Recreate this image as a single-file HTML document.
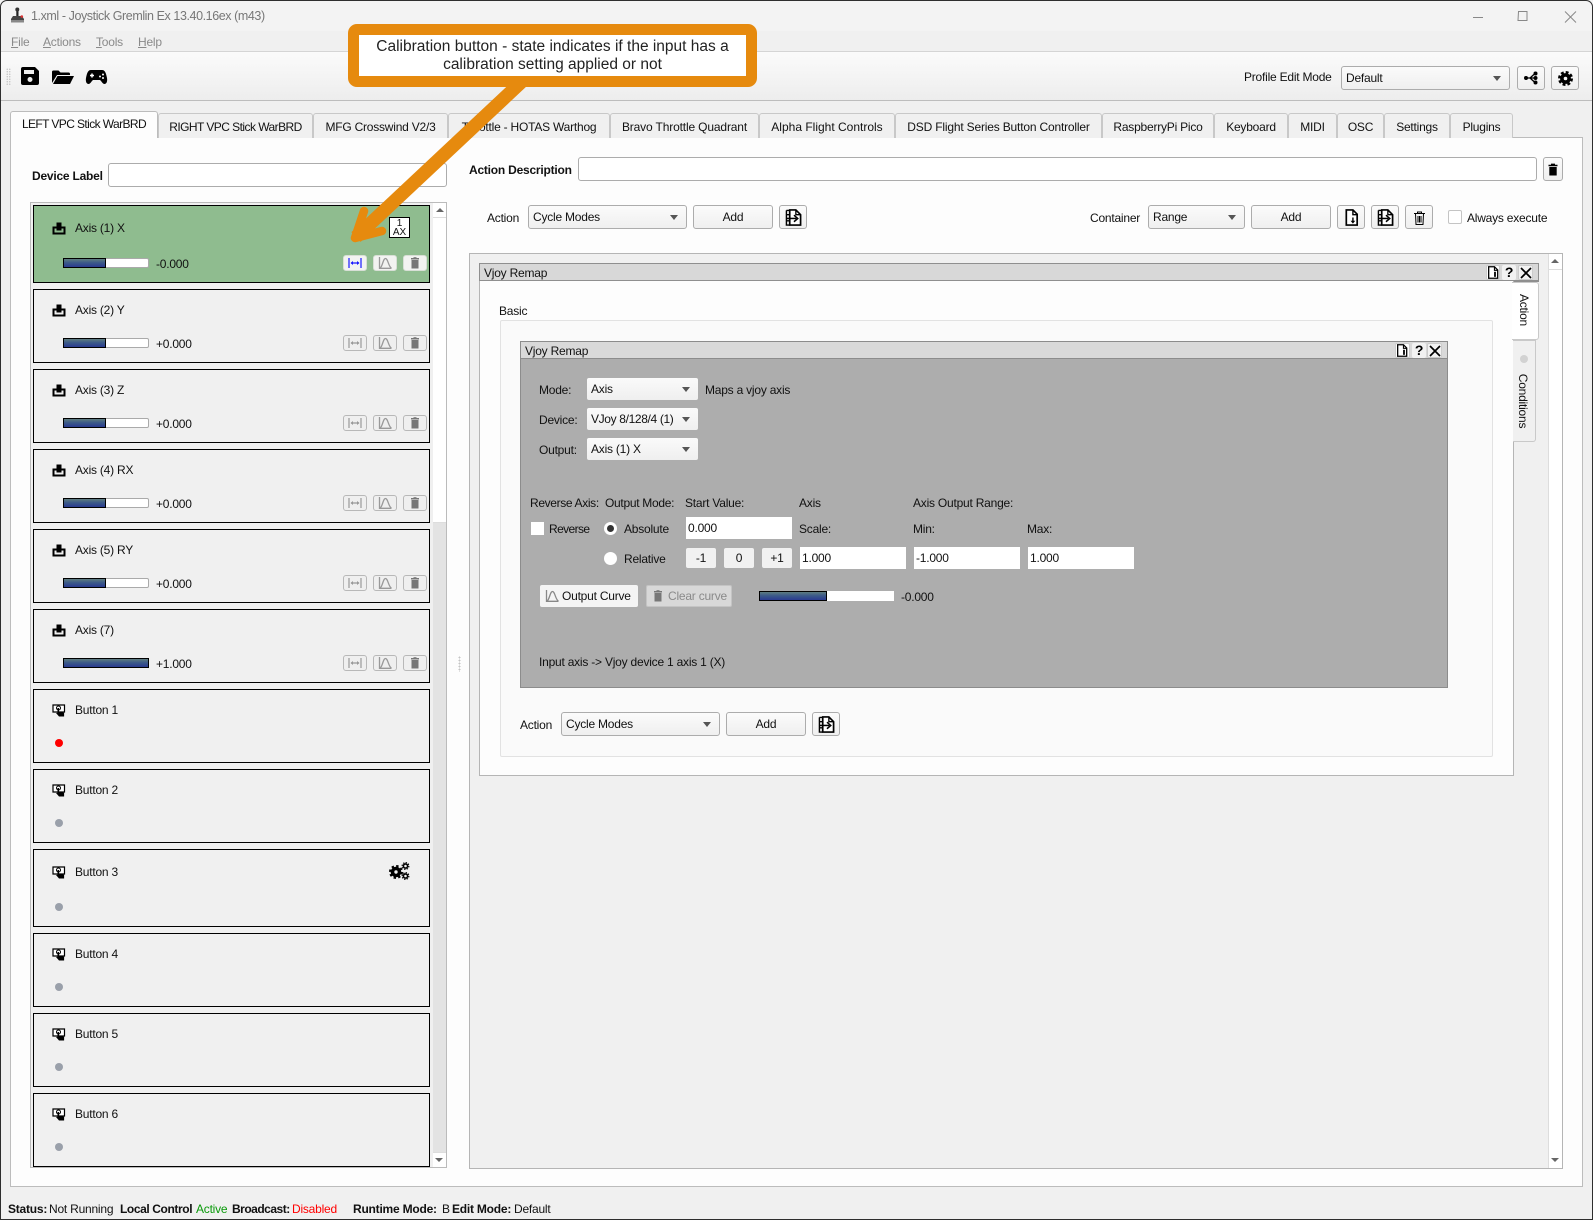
<!DOCTYPE html>
<html><head><meta charset="utf-8"><title>Joystick Gremlin Ex</title>
<style>
html,body{margin:0;padding:0;width:1593px;height:1220px;overflow:hidden;background:#f0f0f0}
body{position:relative;font-family:"Liberation Sans",sans-serif;font-size:12px;letter-spacing:-.22px;color:#111}
div,span,svg{position:absolute;box-sizing:border-box}
.t{height:16px;line-height:16px;white-space:nowrap}
b{font-weight:bold}
u{text-decoration:underline}
.m{color:#8a8a8a;top:34px}
.tab{top:113px;height:25px;background:#f0f0f0;border:1px solid #c8c8c8;border-bottom:none;border-radius:3px 3px 0 0;display:flex;align-items:center;justify-content:center;white-space:nowrap;padding-top:1px}
.in{background:#fff;border:1px solid #acacac;border-radius:3px}
.cb{background:linear-gradient(#fbfbfb,#efefef);border:1px solid #acacac;border-radius:3px;padding-left:4px;line-height:23px;white-space:nowrap}
.cb:after,.gc:after{content:"";position:absolute;right:8px;top:9px;border:4px solid transparent;border-top:5px solid #555;border-bottom:none}
.btn{background:linear-gradient(#fbfbfb,#efefef);border:1px solid #acacac;border-radius:3px;text-align:center;line-height:23px}
.gc{background:linear-gradient(#fafafa,#efefef);border-radius:2px;padding-left:4px;height:22px;line-height:23px;white-space:nowrap}
.gi{background:#fff;height:22px;padding-left:2px;line-height:22px}
.gb{background:#f1f1f1;border-radius:2px;text-align:center;line-height:20px;height:20px;width:30px;top:548px}
.r{left:33px;width:397px;height:74px;background:#f0f0f0;border:1.3px solid #000}
.r.h{height:78px}
.ic{left:18px;top:14px;width:14px;height:13px}
.h .ic{top:16px}
.l{left:41px;top:12px}
.h .l{top:14px}
.bar{left:29px;top:48px;width:86px;height:10px;background:#fff;border:1px solid #aaa;border-radius:2px}
.h .bar{top:52px}
.bar i,.b2 i{position:absolute;left:-1px;top:-1px;bottom:-1px;display:block;border:1px solid #000;background:linear-gradient(#5f7d80,#3c5a88 45%,#2a3a90)}
.v{left:122px;top:46px}
.h .v{top:50px}
.sb{top:45px;width:24px;height:16px;background:#efefef;border:1px solid #b8b8b8;border-radius:3px}
.h .sb{top:49px;background:#f2f3f1;border-color:#d8dfd6}
.sb svg{left:4px;top:1px;width:14px;height:12px}
.d{left:21px;top:49px;width:8px;height:8px;border-radius:50%;background:#9aa0aa}
.h .d{top:53px}
.st{top:1201px}
</style></head><body>

<svg width="0" height="0" style="left:0;top:0">
<symbol id="axis" viewBox="0 0 14 13"><path fill-rule="evenodd" d="M.5 4.500h4V.5h5v4h4V12.500H.5zM2.500 6.500v4h9v-4H9.500v2h-5v-2z" fill="#000"/></symbol>
<symbol id="btn" viewBox="0 0 14 13"><path d="M1 1h11.500v7H1z" fill="#fff" stroke="#000" stroke-width="1.200"/><circle cx="6.500" cy="4" r="2" fill="none" stroke="#000"/><path d="M5.500 4h1.600v3.500l5 1.200V12.500H7L4 9l1.500-.2z" fill="#000"/></symbol>
<symbol id="cal" viewBox="0 0 14 12"><path d="M1 1v10M13 1v10M3 6h8" stroke="currentColor" stroke-width="1.200" fill="none"/><path d="M2.500 6l2.500-2v4zM11.500 6L9 4v4z" fill="currentColor"/></symbol>
<symbol id="crv" viewBox="0 0 14 12"><path d="M1.500 0v11.300h12" fill="none" stroke="currentColor" stroke-width="1.300"/><path d="M2 11C4.500 10 5 1.500 7.500 1.500S10.500 10 13.500 11" fill="none" stroke="currentColor" stroke-width="1.300"/></symbol>
<symbol id="tr" viewBox="0 0 14 12"><path d="M3 1h8v1.500H3zM3.500 3h7v8.500h-7z" fill="currentColor"/><path d="M5.500 .2h3V1h-3z" fill="currentColor"/></symbol>
<symbol id="doc" viewBox="0 0 16 18"><path d="M2.500 1h7l4.500 4.500V17H2.500z" fill="#fff" stroke="#000" stroke-width="1.800"/><path d="M9.500 1v5H14" fill="none" stroke="#000" stroke-width="1.500"/></symbol>
<symbol id="tdoc" viewBox="0 0 16 18"><path d="M2 1h8l4.500 4.500V17H2z" fill="#fff" stroke="#000" stroke-width="1.800"/><path d="M10 1v5h4.500" fill="none" stroke="#000" stroke-width="1.500"/><path d="M9.500 8h2.500v7H9.500z" fill="#000"/></symbol>
<symbol id="docin" viewBox="0 0 16 18"><path d="M2.500 1h7l4.500 4.500V17H2.500z" fill="#fff" stroke="#000" stroke-width="1.800"/><path d="M9.500 1v5H14" fill="none" stroke="#000" stroke-width="1.500"/><path d="M9.500 9v5" stroke="#000" stroke-width="1.500"/><path d="M7 12.500h5L9.500 15.500z" fill="#000"/></symbol>
<symbol id="docout" viewBox="0 0 18 18"><path d="M5 1h6.500L16.500 6V17H5z" fill="#fff" stroke="#000" stroke-width="1.800"/><path d="M11.500 1v5h5" fill="none" stroke="#000" stroke-width="1.400"/><path d="M1.500 1.500H5M1.500 1.500V17H5M1.500 6H5M1.500 12.500H5" fill="none" stroke="#000" stroke-width="1.500"/><path d="M2 10h10" stroke="#000" stroke-width="1.600"/><path d="M9.500 6.500l4 3.500-4 3.500" fill="none" stroke="#000" stroke-width="1.600"/></symbol>
</svg>

<!-- window chrome -->
<div style="left:0;top:0;width:1593px;height:31px;background:#f3f3f3"></div>
<div style="left:0;top:31px;width:1593px;height:21px;background:#f0f0f0;border-bottom:1px solid #d5d5d5"></div>
<div style="left:0;top:52px;width:1593px;height:49px;background:linear-gradient(#fbfbfb,#ededed);border-bottom:1px solid #bdbdbd"></div>
<div style="left:0;top:0;width:1593px;height:1220px;border:1px solid #2e2e2e;border-radius:7px 7px 0 0;z-index:30"></div>
<svg style="left:10px;top:7px" width="15" height="17" viewBox="0 0 15 17"><path d="M6.300 1h2.200v8H6.300z" fill="#222"/><circle cx="7.300" cy="2.500" r="2" fill="#333"/><path d="M3 9h9l2 3v1H1v-1z" fill="#444"/><path d="M1 13h13v2.500H1z" fill="#888"/><circle cx="11.800" cy="9.500" r="1.300" fill="#d33"/></svg>
<span class="t" style="left:31px;top:8px;color:#777;font-size:12.500px;letter-spacing:-.42px">1.xml - Joystick Gremlin Ex 13.40.16ex (m43)</span>
<svg style="left:1467px;top:5px" width="120" height="22" fill="none" stroke="#888" stroke-width="1"><path d="M6 12.500h10M51.500 6.500h8.500v9h-9zM98 6.500l11 11M109 6.500l-11 11"/></svg>
<span class="t m" style="left:11px"><u>F</u>ile</span>
<span class="t m" style="left:43px"><u>A</u>ctions</span>
<span class="t m" style="left:96px"><u>T</u>ools</span>
<span class="t m" style="left:138px"><u>H</u>elp</span>

<div style="left:6px;top:68px;width:5px;height:17px;background:radial-gradient(#c4c4c4 35%,transparent 45%) 0 0/2.500px 2.500px"></div>
<svg style="left:20px;top:66px" width="20" height="20" viewBox="0 0 20 20"><path d="M3 1h12l4 4v12a2 2 0 0 1-2 2H3a2 2 0 0 1-2-2V3a2 2 0 0 1 2-2z" fill="#000"/><path d="M4 4h10v4H4z" fill="#eee"/><circle cx="10" cy="13.500" r="2.500" fill="#eee"/></svg>
<svg style="left:51px;top:69px" width="24" height="16" viewBox="0 0 24 16"><path d="M1 14V3a1.500 1.500 0 0 1 1.500-1.500h5l2 2h8A1.500 1.500 0 0 1 19 5v1H6L1 14z" fill="#000"/><path d="M6.500 7H23l-4 8H2z" fill="#000"/></svg>
<svg style="left:85px;top:69px" width="23" height="16" viewBox="0 0 23 16"><path d="M6 1h11c3 0 4 3 5 8 .6 3.500-.5 6-2.500 6-2 0-3-3-4.500-4H8c-1.500 1-2.500 4-4.500 4C1.500 15 .4 12.500 1 9c1-5 2-8 5-8z" fill="#000"/><path d="M5 6.500h4M7 4.500v4" stroke="#fff" stroke-width="1.500"/><circle cx="15" cy="7.500" r="1" fill="#fff"/><circle cx="18" cy="5.500" r="1" fill="#fff"/><circle cx="18" cy="9" r="1" fill="#fff"/></svg>

<span class="t" style="left:1244px;top:69px">Profile Edit Mode</span>
<div class="cb" style="left:1341px;top:66px;width:169px;height:24px">Default</div>
<div class="btn" style="left:1517px;top:66px;width:28px;height:24px"><svg style="left:6px;top:4px" width="15" height="14" viewBox="0 0 15 14"><path d="M2 7h4M6 7l5-4.500M6 7h5M6 7l5 4.500" stroke="#000" stroke-width="1.300" fill="none"/><circle cx="2" cy="7" r="2"/><circle cx="11.500" cy="2.500" r="2"/><circle cx="11.500" cy="7" r="2"/><circle cx="11.500" cy="11.500" r="2"/></svg></div>
<div class="btn" style="left:1551px;top:66px;width:28px;height:24px"><svg style="left:6px;top:4px" width="15" height="15" viewBox="0 0 15 15"><circle cx="7.500" cy="7.500" r="3.600" fill="none" stroke="#000" stroke-width="3.600"/><circle cx="7.500" cy="7.500" r="6.300" fill="none" stroke="#000" stroke-width="2.400" stroke-dasharray="2.900 2.050"/></svg></div>

<!-- tabs -->
<div style="left:10px;top:137px;width:1573px;height:1050px;background:#fdfdfd;border:1px solid #bcbcbc"></div>
<div class="tab" style="left:158px;width:155px;letter-spacing:-.55px">RIGHT VPC Stick WarBRD</div>
<div class="tab" style="left:313px;width:135px">MFG Crosswind V2/3</div>
<div class="tab" style="left:448px;width:162px">Throttle - HOTAS Warthog</div>
<div class="tab" style="left:610px;width:149px;letter-spacing:-.15px">Bravo Throttle Quadrant</div>
<div class="tab" style="left:759px;width:136px;letter-spacing:0">Alpha Flight Controls</div>
<div class="tab" style="left:895px;width:207px;letter-spacing:-.18px">DSD Flight Series Button Controller</div>
<div class="tab" style="left:1102px;width:112px">RaspberryPi Pico</div>
<div class="tab" style="left:1214px;width:74px">Keyboard</div>
<div class="tab" style="left:1288px;width:49px">MIDI</div>
<div class="tab" style="left:1337px;width:47px">OSC</div>
<div class="tab" style="left:1384px;width:66px">Settings</div>
<div class="tab" style="left:1450px;width:63px">Plugins</div>
<div class="tab" style="left:10px;top:111px;width:148px;height:27px;background:#fdfdfd;border-color:#bcbcbc;padding-top:0;padding-bottom:2px;letter-spacing:-.6px">LEFT VPC Stick WarBRD</div>

<!-- left panel -->
<span class="t" style="left:32px;top:168px"><b>Device Label</b></span>
<div class="in" style="left:108px;top:163px;width:339px;height:24px"></div>
<div style="left:30px;top:202px;width:417px;height:966px;background:#f0f0f0;border:1px solid #bbb"></div>

<div style="left:433px;top:203px;width:13px;height:964px;background:#e3e3e3"></div>
<div style="left:433px;top:203px;width:13px;height:320px;background:#fff;border-bottom:1px solid #ddd"></div>
<div style="left:433px;top:203px;width:13px;height:15px;background:#fff;border-bottom:1px solid #ddd"></div>
<div style="left:436px;top:208px;border:4px solid transparent;border-bottom:4px solid #666;border-top:none"></div>
<div style="left:433px;top:1152px;width:13px;height:15px;background:#fff;border-top:1px solid #ddd"></div>
<div style="left:435px;top:1158px;border:4px solid transparent;border-top:4px solid #666;border-bottom:none"></div>

<div class="r h" style="top:205px;background:#8fbc8f"><svg class="ic"><use href="#axis"/></svg><span class="t l">Axis (1) X</span><div class="bar"><i style="width:41px"></i></div><span class="t v">-0.000</span>
<div class="sb" style="left:309px;color:#1a1aff"><svg><use href="#cal"/></svg></div><div class="sb" style="left:339px;color:#999"><svg><use href="#crv"/></svg></div><div class="sb" style="left:369px;color:#777"><svg><use href="#tr"/></svg></div>
<div style="left:355px;top:11px;width:21px;height:21px;background:#fff;border:1px solid #000;font-size:10px;line-height:9px;text-align:center;padding-top:1px;letter-spacing:0">1<br>AX</div></div>

<div class="r" style="top:289px"><svg class="ic"><use href="#axis"/></svg><span class="t l">Axis (2) Y</span><div class="bar"><i style="width:41px"></i></div><span class="t v">+0.000</span>
<div class="sb" style="left:309px;color:#999"><svg><use href="#cal"/></svg></div><div class="sb" style="left:339px;color:#999"><svg><use href="#crv"/></svg></div><div class="sb" style="left:369px;color:#777"><svg><use href="#tr"/></svg></div></div>

<div class="r" style="top:369px"><svg class="ic"><use href="#axis"/></svg><span class="t l">Axis (3) Z</span><div class="bar"><i style="width:41px"></i></div><span class="t v">+0.000</span>
<div class="sb" style="left:309px;color:#999"><svg><use href="#cal"/></svg></div><div class="sb" style="left:339px;color:#999"><svg><use href="#crv"/></svg></div><div class="sb" style="left:369px;color:#777"><svg><use href="#tr"/></svg></div></div>

<div class="r" style="top:449px"><svg class="ic"><use href="#axis"/></svg><span class="t l">Axis (4) RX</span><div class="bar"><i style="width:41px"></i></div><span class="t v">+0.000</span>
<div class="sb" style="left:309px;color:#999"><svg><use href="#cal"/></svg></div><div class="sb" style="left:339px;color:#999"><svg><use href="#crv"/></svg></div><div class="sb" style="left:369px;color:#777"><svg><use href="#tr"/></svg></div></div>

<div class="r" style="top:529px"><svg class="ic"><use href="#axis"/></svg><span class="t l">Axis (5) RY</span><div class="bar"><i style="width:41px"></i></div><span class="t v">+0.000</span>
<div class="sb" style="left:309px;color:#999"><svg><use href="#cal"/></svg></div><div class="sb" style="left:339px;color:#999"><svg><use href="#crv"/></svg></div><div class="sb" style="left:369px;color:#777"><svg><use href="#tr"/></svg></div></div>

<div class="r" style="top:609px"><svg class="ic"><use href="#axis"/></svg><span class="t l">Axis (7)</span><div class="bar"><i style="width:84px"></i></div><span class="t v">+1.000</span>
<div class="sb" style="left:309px;color:#999"><svg><use href="#cal"/></svg></div><div class="sb" style="left:339px;color:#999"><svg><use href="#crv"/></svg></div><div class="sb" style="left:369px;color:#777"><svg><use href="#tr"/></svg></div></div>

<div class="r" style="top:689px"><svg class="ic"><use href="#btn"/></svg><span class="t l">Button 1</span><div class="d" style="background:#f00"></div></div>
<div class="r" style="top:769px"><svg class="ic"><use href="#btn"/></svg><span class="t l">Button 2</span><div class="d"></div></div>
<div class="r h" style="top:849px"><svg class="ic"><use href="#btn"/></svg><span class="t l">Button 3</span><div class="d"></div>
<svg style="left:355px;top:12px" width="21" height="19" viewBox="0 0 21 19"><circle cx="7" cy="10" r="3.500" fill="none" stroke="#000" stroke-width="3.600"/><circle cx="7" cy="10" r="6" fill="none" stroke="#000" stroke-width="2" stroke-dasharray="2.400 2.310"/><circle cx="16.500" cy="4" r="2.100" fill="none" stroke="#000" stroke-width="1.600"/><circle cx="16.500" cy="4" r="3.400" fill="none" stroke="#000" stroke-width="1.100" stroke-dasharray="1.400 1.270"/><circle cx="16.500" cy="14" r="2.100" fill="none" stroke="#000" stroke-width="1.600"/><circle cx="16.500" cy="14" r="3.400" fill="none" stroke="#000" stroke-width="1.100" stroke-dasharray="1.400 1.270"/></svg></div>
<div class="r" style="top:933px"><svg class="ic"><use href="#btn"/></svg><span class="t l">Button 4</span><div class="d"></div></div>
<div class="r" style="top:1013px"><svg class="ic"><use href="#btn"/></svg><span class="t l">Button 5</span><div class="d"></div></div>
<div class="r" style="top:1093px"><svg class="ic"><use href="#btn"/></svg><span class="t l">Button 6</span><div class="d"></div></div>

<div style="left:458px;top:656px;width:3px;height:16px;background:radial-gradient(#c4c4c4 40%,transparent 50%) 0 0/3px 3px"></div>

<!-- right panel top -->
<span class="t" style="left:469px;top:162px"><b>Action Description</b></span>
<div class="in" style="left:578px;top:157px;width:959px;height:24px"></div>
<div class="btn" style="left:1543px;top:157px;width:20px;height:24px"><svg style="left:3px;top:5px;width:12px;height:13px" viewBox="0 0 12 13"><path d="M1.500 1.800h9v1.400h-9zM4 .6h4v1.200H4zM2.300 4h7.400v8.500H2.300z" fill="#000"/></svg></div>

<span class="t" style="left:487px;top:210px">Action</span>
<div class="cb" style="left:528px;top:205px;width:159px;height:24px">Cycle Modes</div>
<div class="btn" style="left:693px;top:205px;width:80px;height:24px">Add</div>
<div class="btn" style="left:779px;top:205px;width:28px;height:24px"><svg style="left:5px;top:3px;width:17px;height:17px"><use href="#docout"/></svg></div>

<span class="t" style="left:1090px;top:210px">Container</span>
<div class="cb" style="left:1148px;top:205px;width:97px;height:24px">Range</div>
<div class="btn" style="left:1251px;top:205px;width:80px;height:24px">Add</div>
<div class="btn" style="left:1337px;top:205px;width:28px;height:24px"><svg style="left:5px;top:3px;width:17px;height:17px"><use href="#docin"/></svg></div>
<div class="btn" style="left:1371px;top:205px;width:28px;height:24px"><svg style="left:5px;top:3px;width:17px;height:17px"><use href="#docout"/></svg></div>
<div class="btn" style="left:1405px;top:205px;width:28px;height:24px"><svg style="left:7px;top:5px;width:13px;height:14px" viewBox="0 0 13 14" fill="none" stroke="#000"><path d="M1 2.500h11M4.500 2.500V1h4v1.500M2.500 2.500l.5 11h7l.5-11M5 5v6.500M6.500 5v6.500M8 5v6.500"/></svg></div>
<div style="left:1448px;top:210px;width:14px;height:14px;background:#fff;border:1px solid #c4c4c4;border-radius:2px"></div>
<span class="t" style="left:1467px;top:210px">Always execute</span>

<!-- action scroll area -->
<div style="left:469px;top:253px;width:1094px;height:916px;background:#f0f0f0;border:1px solid #b5b5b5"></div>
<div style="left:1548px;top:254px;width:14px;height:914px;background:#fff;border-left:1px solid #ddd"></div>
<div style="left:1548px;top:254px;width:14px;height:16px;background:#fff;border-bottom:1px solid #ddd;border-left:1px solid #ddd"></div>
<div style="left:1551px;top:259px;border:4px solid transparent;border-bottom:4px solid #666;border-top:none"></div>
<div style="left:1551px;top:1158px;border:4px solid transparent;border-top:4px solid #666;border-bottom:none"></div>

<div style="left:479px;top:263px;width:1060px;height:19px;background:#d8d8d8;border:1px solid #8f8f8f;border-bottom-width:2px"></div>
<span class="t" style="left:484px;top:265px">Vjoy Remap</span>
<div style="left:1486px;top:265px;width:14px;height:15px;background:#fff;border-radius:2px;border:1px solid #ccc"><svg style="left:0;top:0;width:12px;height:13px"><use href="#tdoc"/></svg></div>
<div style="left:1502px;top:265px;width:14px;height:15px;background:#f2f2f2;border-radius:2px;font:bold 14px/15px 'Liberation Sans',sans-serif;text-align:center;color:#000">?</div>
<div style="left:1518px;top:265px;width:15px;height:15px;background:#f2f2f2;border-radius:2px;border:1px solid #ccc"><svg style="left:1px;top:1px" width="12" height="12"><path d="M1 1l10 10M11 1L1 11" stroke="#000" stroke-width="1.700"/></svg></div>

<div style="left:479px;top:281px;width:1035px;height:495px;background:#fdfdfd;border:1px solid #b5b5b5;border-top:none"></div>
<div style="left:1513px;top:340px;width:23px;height:102px;background:#f0f0f0;border:1px solid #c9c9c9;border-left:none;border-radius:0 0 3px 0"></div>
<div style="left:1520px;top:355px;width:8px;height:8px;border-radius:50%;background:#d2d2d2"></div>
<span class="t" style="left:1523px;top:401px;transform:translate(-50%,-50%) rotate(90deg)">Conditions</span>
<div style="left:1512px;top:282px;width:27px;height:58px;background:#fff;border:1px solid #c9c9c9;border-left:none;border-radius:0 3px 3px 0"></div>
<span class="t" style="left:1524px;top:310px;transform:translate(-50%,-50%) rotate(90deg)">Action</span>

<span class="t" style="left:499px;top:303px">Basic</span>
<div style="left:500px;top:320px;width:993px;height:437px;background:#fafafa;border:1px solid #e2e2e2;border-radius:2px"></div>

<div style="left:520px;top:341px;width:928px;height:347px;background:#adadad;border:1px solid #8c8c8c"></div>
<div style="left:521px;top:342px;width:926px;height:17px;background:#d9d9d9;border-bottom:1px solid #8c8c8c"></div>
<span class="t" style="left:525px;top:343px">Vjoy Remap</span>
<div style="left:1395px;top:343px;width:15px;height:15px;background:#fff;border-radius:2px;border:1px solid #ccc"><svg style="left:0;top:0;width:12px;height:13px"><use href="#tdoc"/></svg></div>
<div style="left:1412px;top:343px;width:14px;height:15px;background:#f2f2f2;border-radius:2px;font:bold 14px/15px 'Liberation Sans',sans-serif;text-align:center;color:#000">?</div>
<div style="left:1427px;top:343px;width:15px;height:15px;background:#f2f2f2;border-radius:2px;border:1px solid #ccc"><svg style="left:1px;top:1px" width="12" height="12"><path d="M1 1l10 10M11 1L1 11" stroke="#000" stroke-width="1.700"/></svg></div>

<span class="t" style="left:539px;top:382px">Mode:</span>
<div class="gc" style="left:587px;top:378px;width:111px">Axis</div>
<span class="t" style="left:705px;top:382px">Maps a vjoy axis</span>
<span class="t" style="left:539px;top:412px">Device:</span>
<div class="gc" style="left:587px;top:408px;width:111px;letter-spacing:-.35px">VJoy 8/128/4 (1)</div>
<span class="t" style="left:539px;top:442px">Output:</span>
<div class="gc" style="left:587px;top:438px;width:111px">Axis (1) X</div>

<span class="t" style="left:530px;top:495px;letter-spacing:-.35px">Reverse Axis:</span>
<span class="t" style="left:605px;top:495px;letter-spacing:-.3px">Output Mode:</span>
<span class="t" style="left:685px;top:495px">Start Value:</span>
<span class="t" style="left:799px;top:495px">Axis</span>
<span class="t" style="left:913px;top:495px">Axis Output Range:</span>

<div style="left:531px;top:522px;width:13px;height:13px;background:#fff"></div>
<span class="t" style="left:549px;top:521px;letter-spacing:-.6px">Reverse</span>
<div style="left:604px;top:522px;width:13px;height:13px;border-radius:50%;background:#fff"></div>
<div style="left:607px;top:525px;width:7px;height:7px;border-radius:50%;background:#333"></div>
<span class="t" style="left:624px;top:521px">Absolute</span>
<div class="gi" style="left:686px;top:517px;width:106px">0.000</div>
<span class="t" style="left:799px;top:521px">Scale:</span>
<span class="t" style="left:913px;top:521px">Min:</span>
<span class="t" style="left:1027px;top:521px">Max:</span>

<div style="left:604px;top:552px;width:13px;height:13px;border-radius:50%;background:#fff"></div>
<span class="t" style="left:624px;top:551px">Relative</span>
<div class="gb" style="left:686px">-1</div>
<div class="gb" style="left:724px">0</div>
<div class="gb" style="left:762px">+1</div>
<div class="gi" style="left:800px;top:547px;width:106px">1.000</div>
<div class="gi" style="left:914px;top:547px;width:106px">-1.000</div>
<div class="gi" style="left:1028px;top:547px;width:106px">1.000</div>

<div style="left:540px;top:585px;width:98px;height:22px;background:#f4f4f4;border-radius:2px;line-height:22px;padding-left:22px;white-space:nowrap">Output Curve<svg style="left:5px;top:5px;width:14px;height:12px;color:#888"><use href="#crv"/></svg></div>
<div style="left:646px;top:585px;width:86px;height:22px;background:#d8d8d8;border:1px solid #c4c4c4;border-radius:2px;line-height:20px;padding-left:21px;white-space:nowrap;color:#8a8a8a">Clear curve<svg style="left:4px;top:4px;width:14px;height:12px;color:#777"><use href="#tr"/></svg></div>
<div class="b2" style="left:759px;top:591px;width:135px;height:10px;background:#fff"><i style="left:0;top:0;bottom:0;width:66px"></i></div>
<span class="t" style="left:901px;top:589px">-0.000</span>
<span class="t" style="left:539px;top:654px">Input axis -&gt; Vjoy device 1 axis 1 (X)</span>

<span class="t" style="left:520px;top:717px">Action</span>
<div class="cb" style="left:561px;top:712px;width:159px;height:24px">Cycle Modes</div>
<div class="btn" style="left:726px;top:712px;width:80px;height:24px">Add</div>
<div class="btn" style="left:812px;top:712px;width:28px;height:24px"><svg style="left:5px;top:3px;width:17px;height:17px"><use href="#docout"/></svg></div>

<!-- status -->
<span class="t st" style="left:8px"><b>Status:</b></span>
<span class="t st" style="left:49px">Not Running</span>
<span class="t st" style="left:120px;letter-spacing:-.4px"><b>Local Control</b></span>
<span class="t st" style="left:196px;color:#0a9a0a">Active</span>
<span class="t st" style="left:232px;letter-spacing:-.5px"><b>Broadcast:</b></span>
<span class="t st" style="left:292px;color:#f00">Disabled</span>
<span class="t st" style="left:353px"><b>Runtime Mode:</b></span>
<span class="t st" style="left:442px">B</span>
<span class="t st" style="left:452px"><b>Edit Mode:</b></span>
<span class="t st" style="left:514px">Default</span>

<!-- callout -->
<svg style="left:0;top:0;z-index:20" width="1593" height="1220" fill="none" stroke="#e68a0e" stroke-linecap="round" stroke-linejoin="round">
<path d="M531 73L356 237" stroke-width="13.500" stroke-linecap="butt"/>
<path d="M364 211L355 238L382 231" stroke-width="8.500"/>
</svg>
<div style="left:348px;top:24px;width:409px;height:63px;background:#fff;border:11px solid #e68a0e;border-radius:9px;z-index:21;font-size:15.500px;letter-spacing:0;line-height:18px;text-align:center;color:#222;padding-top:3px">Calibration button - state indicates if the input has a<br>calibration setting applied or not</div>
</body></html>
